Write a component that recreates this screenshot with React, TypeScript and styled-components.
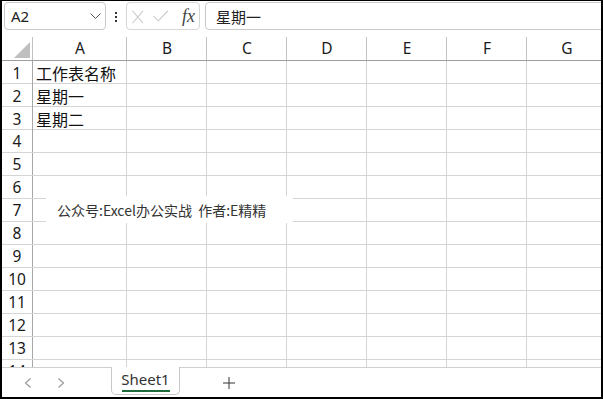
import React from 'react';
import styled, { createGlobalStyle } from 'styled-components';

const GlobalStyle = createGlobalStyle`
  html, body {
    margin: 0;
    padding: 0;
    background: #fff;
  }
  body {
    font-family: 'Noto Sans', 'Noto Sans CJK SC', sans-serif;
  }
`;

const columns = ['A', 'B', 'C', 'D', 'E', 'F', 'G'];
const gridCols = '31px 94px 80px 80px 80px 80px 80px 80px';
const rows = Array.from({ length: 14 }, (_, i) => i + 1);
const cellData: Record<number, string> = {
  1: '工作表名称',
  2: '星期一',
  3: '星期二',
};

const App = () => {
  return (
    <>
      <GlobalStyle />
      <Frame>
        <FormulaBar>
          <NameBox>
            <span>A2</span>
            <svg width="11" height="6" viewBox="0 0 11 6">
              <polyline points="0.5,0.5 5.5,5.5 10.5,0.5" fill="none" stroke="#555" strokeWidth="1" />
            </svg>
          </NameBox>
          <Dots>
            <i />
            <i />
            <i />
          </Dots>
          <ButtonGroup>
            <svg width="12" height="14" viewBox="0 0 12 14">
              <path d="M0.5 0.5 L11.5 13.5 M11.5 0.5 L0.5 13.5" stroke="#c6c6c6" strokeWidth="1.1" fill="none" />
            </svg>
            <svg width="16" height="12" viewBox="0 0 16 12">
              <polyline points="0.5,6 5.5,11 15.5,0.5" fill="none" stroke="#c6c6c6" strokeWidth="1.1" />
            </svg>
            <Fx>fx</Fx>
          </ButtonGroup>
          <FormulaInput>星期一</FormulaInput>
        </FormulaBar>

        <HeaderRow>
          <CornerCell>
            <Triangle />
          </CornerCell>
          {columns.map((c) => (
            <ColHeader key={c}>{c}</ColHeader>
          ))}
        </HeaderRow>

        <GridBody>
          {rows.map((r) => (
            <Row key={r}>
              <RowHeader>{r}</RowHeader>
              {columns.map((c) => (
                <Cell key={c}>{c === 'A' ? cellData[r] : ''}</Cell>
              ))}
            </Row>
          ))}
        </GridBody>

        <TabBar>
          <NavButton>
            <svg width="8" height="10" viewBox="0 0 8 10">
              <polyline points="6.5,0.5 1.5,5 6.5,9.5" fill="none" stroke="#9a9a9a" strokeWidth="1.2" />
            </svg>
          </NavButton>
          <NavButton>
            <svg width="8" height="10" viewBox="0 0 8 10">
              <polyline points="1.5,0.5 6.5,5 1.5,9.5" fill="none" stroke="#9a9a9a" strokeWidth="1.2" />
            </svg>
          </NavButton>
          <SheetTab>
            <span>Sheet1</span>
            <Underline />
          </SheetTab>
          <AddButton>
            <svg width="12" height="12" viewBox="0 0 12 12">
              <path d="M6 0 V12 M0 6 H12" stroke="#333" strokeWidth="1" fill="none" />
            </svg>
          </AddButton>
        </TabBar>

        <Watermark>公众号:Excel办公实战&nbsp;&nbsp;作者:E精精</Watermark>
      </Frame>
    </>
  );
};

export default App;

const Frame = styled.div`
  position: relative;
  width: 603px;
  height: 399px;
  box-sizing: border-box;
  border-style: solid;
  border-color: #000;
  border-width: 1px 2px 2px 2px;
  display: flex;
  flex-direction: column;
  overflow: hidden;
  background: #fff;
  color: #222;
`;

const FormulaBar = styled.div`
  height: 29px;
  flex: none;
  display: flex;
  align-items: flex-start;
  padding: 1px 0 0 2px;
  box-sizing: border-box;
`;

const NameBox = styled.div`
  width: 102px;
  height: 28px;
  box-sizing: border-box;
  border: 1px solid #c9c9c9;
  border-radius: 4px;
  display: flex;
  align-items: center;
  justify-content: space-between;
  padding: 0 4px 0 6px;
  font-size: 15px;
  color: #222;
`;

const Dots = styled.div`
  margin: 10px 0 0 9px;
  width: 3px;
  display: flex;
  flex-direction: column;
  gap: 2px;

  > i {
    display: block;
    width: 2px;
    height: 2px;
    background: #333;
  }
`;

const ButtonGroup = styled.div`
  margin-left: 8px;
  width: 74px;
  height: 28px;
  box-sizing: border-box;
  border: 1px solid #d6d6d6;
  border-radius: 4px;
  display: flex;
  align-items: center;
  padding: 0 4px 0 5px;
  gap: 9px;

  > svg:first-child {
    margin-top: 1px;
  }
`;

const Fx = styled.span`
  font-family: 'Liberation Serif', serif;
  font-style: italic;
  font-size: 18px;
  color: #444;
  margin-left: 5px;
  line-height: 1;
`;

const FormulaInput = styled.div`
  flex: 1;
  margin: 0 -6px 0 5px;
  height: 28px;
  box-sizing: border-box;
  border: 1px solid #c9c9c9;
  border-radius: 4px;
  display: flex;
  align-items: center;
  padding-left: 10px;
  font-size: 15px;
  font-family: 'Noto Sans CJK SC', sans-serif;
  color: #222;
`;

const HeaderRow = styled.div`
  height: 31px;
  flex: none;
  box-sizing: border-box;
  border-bottom: 1px solid #9e9e9e;
  display: grid;
  grid-template-columns: ${gridCols};
`;

const ColHeader = styled.div`
  display: flex;
  align-items: center;
  justify-content: center;
  padding-top: 5px;
  font-size: 15.5px;
  color: #1a1a1a;
  background: linear-gradient(#c2c2c2, #c2c2c2) no-repeat right bottom / 1px 23px;
`;

const CornerCell = styled(ColHeader)`
  justify-content: flex-end;
  align-items: flex-end;
  padding: 0 3px 2px 0;
`;

const Triangle = styled.div`
  width: 16px;
  height: 16px;
  background: #bfbfbf;
  clip-path: polygon(100% 0, 100% 100%, 0 100%);
`;

const GridBody = styled.div`
  flex: 1;
  overflow: hidden;
`;

const Row = styled.div`
  height: 23px;
  box-sizing: border-box;
  border-bottom: 1px solid #d4d4d4;
  display: grid;
  grid-template-columns: ${gridCols};
`;

const RowHeader = styled.div`
  border-right: 1px solid #a8a8a8;
  display: flex;
  align-items: center;
  justify-content: center;
  font-size: 15.5px;
  color: #1a1a1a;
`;

const Cell = styled.div`
  border-right: 1px solid #d4d4d4;
  display: flex;
  align-items: center;
  padding-left: 3px;
  font-size: 16px;
  font-family: 'Noto Sans CJK SC', sans-serif;
  color: #111;
  white-space: nowrap;
`;

const TabBar = styled.div`
  height: 30px;
  flex: none;
  box-sizing: border-box;
  border-top: 1px solid #cfcfcf;
  display: flex;
  align-items: center;
  padding-left: 9px;
`;

const NavButton = styled.div`
  width: 33px;
  display: flex;
  justify-content: center;
  align-items: center;
`;

const SheetTab = styled.div`
  align-self: flex-start;
  margin: -1px 0 0 34px;
  width: 69px;
  height: 28px;
  box-sizing: border-box;
  border: 1px solid #c8c8c8;
  border-top: none;
  border-radius: 0 0 5px 5px;
  background: #fff;
  display: flex;
  flex-direction: column;
  align-items: center;
  padding-top: 4px;
  font-size: 15px;
  color: #333;
  line-height: 17px;
`;

const Underline = styled.div`
  width: 48px;
  height: 2px;
  margin-top: 2px;
  background: #1d6b3b;
`;

const AddButton = styled.div`
  margin-left: 43px;
  display: flex;
  align-items: center;
`;

const Watermark = styled.div`
  position: absolute;
  left: 44px;
  top: 195px;
  width: 247px;
  height: 27px;
  background: #fff;
  display: flex;
  align-items: center;
  padding-left: 11px;
  box-sizing: border-box;
  font-family: 'Noto Sans CJK SC', sans-serif;
  font-size: 14px;
  color: #333;
  white-space: nowrap;
`;
